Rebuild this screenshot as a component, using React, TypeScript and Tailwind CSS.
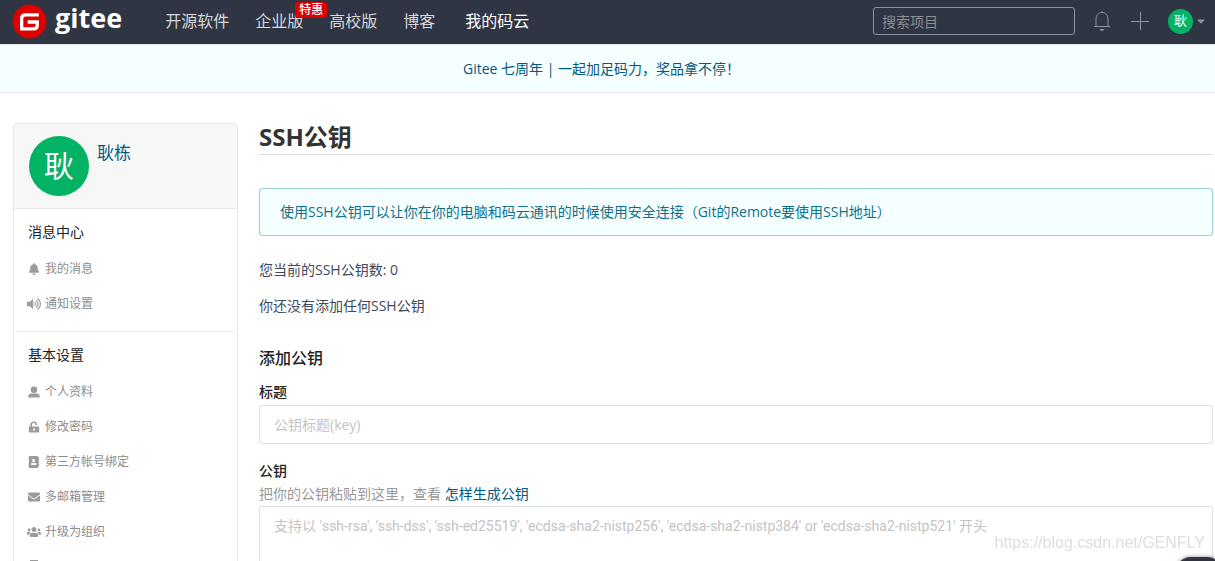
import React from "react";
import { FaAddressBook, FaBell, FaCaretDown, FaEnvelope, FaUsers, FaVolumeUp } from "react-icons/fa";

function UserGlyph() {
  return (
    <svg viewBox="0 0 12 12" className="h-3 w-3" fill="currentColor" aria-hidden="true">
      <circle cx="6" cy="3.7" r="3.3" />
      <path d="M3.6 7.6h4.8c2 0 3.2 1 3.4 2.6.1.7-.2 1.3-1 1.3H1.200c-.8 0-1.100-.6-1-1.300.2-1.600 1.400-2.600 3.400-2.600z" />
    </svg>
  );
}

function UnlockGlyph() {
  return (
    <svg viewBox="0 0 12 12" className="h-3 w-3" fill="currentColor" aria-hidden="true">
      <path
        fillRule="evenodd"
        d="M2.200 5.500V3.800C2.200 1.900 3.600.6 5.600.6S9 1.900 9 3.600v.5H7.300v-.5c0-.9-.7-1.500-1.700-1.500s-1.700.7-1.700 1.700v1.700h6.100c.8 0 1.200.4 1.200 1.100v3.900c0 .7-.4 1-1.200 1H1.900c-.7 0-1.100-.3-1.100-1V6.600c0-.7.4-1.100 1.100-1.100zM5.200 7.200v2.600h1.600V7.200z"
      />
    </svg>
  );
}

function DocGlyph() {
  return (
    <svg viewBox="0 0 12 14" className="h-3.5 w-3" fill="currentColor" aria-hidden="true">
      <path d="M2 0h8v14H2z" />
    </svg>
  );
}

type Item = { id: string; label?: string; icon: React.ReactNode };

const messages: Item[] = [
  { id: "messages", label: "我的消息", icon: <FaBell className="h-3 w-3" /> },
  { id: "notify", label: "通知设置", icon: <FaVolumeUp className="h-3.5 w-3.5" /> },
];

const settings: Item[] = [
  { id: "profile", label: "个人资料", icon: <UserGlyph /> },
  { id: "password", label: "修改密码", icon: <UnlockGlyph /> },
  { id: "bind", label: "第三方帐号绑定", icon: <FaAddressBook className="h-3 w-3" /> },
  { id: "emails", label: "多邮箱管理", icon: <FaEnvelope className="h-3 w-3" /> },
  { id: "upgrade", label: "升级为组织", icon: <FaUsers className="h-3.5 w-3.5" /> },
  { id: "docs", icon: <DocGlyph /> },
];

function MenuSection({ title, items }: { title: string; items: Item[] }) {
  return (
    <section className="px-3 pt-3 pb-2.5">
      <h2 className="px-0.5 text-sm leading-[22px] text-[#222]">{title}</h2>
      <ul className="mt-2">
        {items.map((item) => (
          <li key={item.id}>
            <a href="#" className="flex h-[35px] items-center gap-1 text-xs text-[#8c8c8c]">
              <span className="flex w-[15px] justify-center text-[#9b9b9b]">{item.icon}</span>
              {item.label}
            </a>
          </li>
        ))}
      </ul>
    </section>
  );
}

function Header() {
  return (
    <header className="flex h-11 items-center bg-[#2f3542] pr-2.5 pb-0.5 pl-3 text-base text-[#d5d7da]">
      <a href="#" className="flex items-center gap-2" aria-label="gitee">
        <svg viewBox="0 0 34 34" className="h-[35px] w-[35px]" aria-hidden="true">
          <circle cx="17" cy="17" r="16.500" fill="#dc0000" />
          <path
            d="M26 10.500H13.200c-2.300 0-3.800 1.300-3.800 3.600v10.100h11.600c2.300 0 3.500-1.200 3.500-3.200v-3.500h-9.300"
            fill="none"
            stroke="#fff"
            strokeWidth="3.200"
          />
        </svg>
        <span className="pb-1.5 font-['Open_Sans'] text-[27px] leading-8 font-bold text-white">gitee</span>
      </a>
      <nav className="ml-[43px] flex items-center gap-[26px] leading-6">
        <a href="#">开源软件</a>
        <a href="#" className="relative">
          企业版
          <span className="absolute -top-[7px] -right-6 rounded-[3px] bg-[#dc0000] px-1 text-xs leading-4 font-medium whitespace-nowrap text-white">
            特惠
          </span>
        </a>
        <a href="#">高校版</a>
        <a href="#">博客</a>
        <a href="#" className="ml-1 text-white">我的码云</a>
      </nav>
      <div className="ml-auto flex items-center">
        <input
          type="search"
          aria-label="搜索项目"
          placeholder="搜索项目"
          className="h-7 w-[202px] rounded-[3px] border border-[#8c92a1] bg-transparent px-2 text-sm placeholder:text-[#8a8d94]"
        />
        <button type="button" aria-label="通知" className="ml-[18px]">
          <svg viewBox="0 0 18 22" className="h-[22px] w-[18px]" fill="none" stroke="#8f94a3" aria-hidden="true">
            <path d="M9 1v1.500M1 16.500h16M3 16.500V9c0-4 2.500-6.500 6-6.500S15 5 15 9v7.500" />
            <path d="M6.500 19h5c-.5 1.300-1.300 2-2.500 2s-2-.7-2.500-2z" fill="#8f94a3" stroke="none" />
          </svg>
        </button>
        <button type="button" aria-label="新建" className="ml-5">
          <svg viewBox="0 0 18 18" className="h-[18px] w-[18px]" stroke="#8f94a3" aria-hidden="true">
            <path d="M9.500 0v18M0 9.500h18" />
          </svg>
        </button>
        <button type="button" aria-label="账户" className="ml-[19px] flex items-center gap-1">
          <span className="flex h-[25px] w-[25px] items-center justify-center rounded-full bg-[#03b365] text-[13px] text-white">
            耿
          </span>
          <FaCaretDown className="h-3 w-2 text-[#8f94a3]" />
        </button>
      </div>
    </header>
  );
}

export default function App() {
  return (
    <div className="h-screen overflow-hidden bg-white font-['Open_Sans','Noto_Sans_CJK_SC',sans-serif] text-sm text-[#40485b]">
      <Header />
      <div className="border-y border-[#e3e9ed] bg-[#f6ffff] py-[13px] pr-3 text-center leading-[21px]">
        <a href="#" className="text-[#005980]">Gitee 七周年 | 一起加足码力，奖品拿不停！</a>
      </div>

      <div className="flex items-start gap-[21px] pt-[30px] pr-0.5 pl-[13px]">
        <aside className="w-[225px] shrink-0 rounded-[3px] border border-[#e3e9ed]">
          <div className="flex gap-2 border-b border-[#e3e9ed] bg-[#f7f7f7] px-[15px] py-3">
            <span className="flex h-[60px] w-[60px] items-center justify-center rounded-full bg-[#03b365] text-[30px] text-white">
              耿
            </span>
            <a href="#" className="pt-[5px] text-[17px] leading-6 text-[#005980]">耿栋</a>
          </div>
          <MenuSection title="消息中心" items={messages} />
          <hr className="mx-0.5 border-[#eee]" />
          <MenuSection title="基本设置" items={settings} />
        </aside>

        <main className="min-w-0 flex-1">
          <h1 className="border-b border-[#dfe1e3] pb-1 text-2xl leading-[27px] font-bold text-[#333]">SSH公钥</h1>
          <div className="mt-[33px] rounded-[4px] border border-[#9bd3de] bg-[#f6ffff] px-5 py-3 leading-[22px] text-[#0e7089] shadow-[0_0_1px_#9bd3de]">
            使用SSH公钥可以让你在你的电脑和码云通讯的时候使用安全连接（Git的Remote要使用SSH地址）
          </div>
          <p className="mt-[23px] leading-[22px]">您当前的SSH公钥数: 0</p>
          <p className="mt-3.5 leading-[22px]">你还没有添加任何SSH公钥</p>
          <form>
            <h2 className="mt-[29px] text-base leading-6 font-medium text-[#222]">添加公钥</h2>
            <label htmlFor="key-title" className="mt-3 block leading-5 font-medium text-[#222]">标题</label>
            <input
              id="key-title"
              type="text"
              placeholder="公钥标题(key)"
              className="mt-[3px] block h-[39px] w-full rounded-[3px] border border-[#dcdfe4] px-3.5 placeholder:text-[#c4c4c4]"
            />
            <label htmlFor="key-body" className="mt-[17px] block leading-5 font-medium text-[#222]">公钥</label>
            <p className="mt-0.5 leading-[22px] text-[#999]">
              把你的公钥粘贴到这里，查看 <a href="#" className="text-[#005980]">怎样生成公钥</a>
            </p>
            <textarea
              id="key-body"
              rows={8}
              placeholder="支持以 'ssh-rsa', 'ssh-dss', 'ssh-ed25519', 'ecdsa-sha2-nistp256', 'ecdsa-sha2-nistp384' or 'ecdsa-sha2-nistp521' 开头"
              className="mt-px block w-full resize-none rounded-[3px] border border-[#dcdfe4] px-3.5 py-2 font-['Roboto','Noto_Sans_CJK_SC',sans-serif] leading-[22px] placeholder:text-[#c4c4c4]"
            />
          </form>
        </main>
      </div>

      <span className="pointer-events-none fixed right-2.5 bottom-2 font-['Liberation_Sans'] text-base leading-5 text-[#dedede]">
        https://blog.csdn.net/GENFLY
      </span>
      <div className="fixed -right-2 -bottom-9 h-10 w-12 rounded-[16px] bg-[#2f3542] shadow-[0_0_4px_#888]" />
    </div>
  );
}
